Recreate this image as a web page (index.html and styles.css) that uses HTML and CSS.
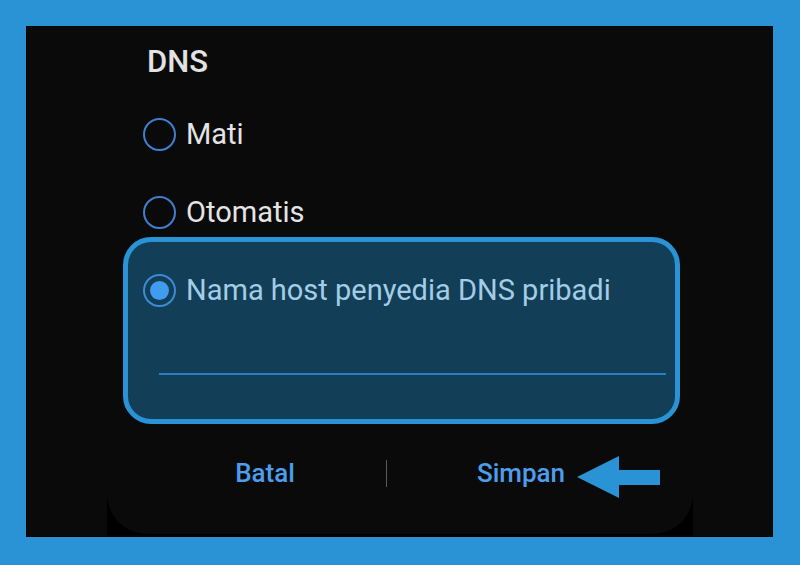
FILE: index.html
```html
<!DOCTYPE html>
<html lang="id">
<head>
  <meta charset="UTF-8">
  <title>DNS Pribadi</title>
  <link rel="stylesheet" href="styles.css">
</head>
<body>
  <div class="frame">
    <div class="screen">
      <div class="dialog">
        <div class="dialog-title">DNS</div>
        <div class="options">
          <label class="option">
            <span class="radio"></span>
            <span class="option-text">Mati</span>
          </label>
          <label class="option">
            <span class="radio"></span>
            <span class="option-text">Otomatis</span>
          </label>
          <div class="selected-box">
            <label class="option">
              <span class="radio checked"></span>
              <span class="option-text">Nama host penyedia DNS pribadi</span>
            </label>
            <div class="host-input"></div>
          </div>
        </div>
        <div class="actions">
          <button class="action-btn cancel-btn">Batal</button>
          <span class="divider"></span>
          <button class="action-btn save-btn">Simpan</button>
          <svg class="arrow" width="84" height="43" viewBox="0 0 84 43">
            <polygon points="0,21 42,0 42,14 83,14 83,29 42,29 42,42" fill="#2a93d5"/>
          </svg>
        </div>
      </div>
    </div>
  </div>
</body>
</html>
```

FILE: styles.css
```css
body {
  margin: 0;
  padding: 0;
  background-color: #2a93d5;
  font-family: Roboto, "Noto Sans", sans-serif;
}

.frame {
  padding: 26px 27px 28px 26px;
}

.screen {
  width: 745px;
  height: 509px;
  border: 1px solid #000;
  background: linear-gradient(to right, #0a0a0a 80px, #000 80px, #000 666px, #0a0a0a 666px);
}

.dialog {
  position: relative;
  margin-left: 80px;
  width: 586px;
  height: 507px;
  background-color: #0a0a0a;
  border-radius: 0 0 40px 40px;
}

.dialog-title {
  padding: 16px 0 0 40px;
  font-size: 31px;
  font-weight: 500;
  color: #e2e2e2;
  line-height: 37px;
}

.options {
  margin-top: 37px;
}

.option {
  display: flex;
  align-items: center;
  gap: 10px;
  height: 34px;
  margin-left: 36px;
  margin-bottom: 44px;
}

.radio {
  width: 29px;
  height: 29px;
  border: 2px solid #3f7fce;
  border-radius: 50%;
  display: flex;
  align-items: center;
  justify-content: center;
  flex-shrink: 0;
}

.radio.checked {
  border-color: #3b8bd6;
}

.radio.checked::after {
  content: "";
  width: 19px;
  height: 19px;
  border-radius: 50%;
  background-color: #3f9cf0;
}

.option-text {
  font-size: 29px;
  color: #e4e4e4;
}

.selected-box {
  box-sizing: border-box;
  height: 187px;
  margin: -36px 13px 0 16px;
  padding-top: 31px;
  border: 5px solid #2a93d5;
  border-radius: 28px;
  background-color: #123e57;
}

.selected-box .option {
  margin-left: 15px;
  margin-bottom: 0;
}

.selected-box .option-text {
  color: #a3cde6;
}

.host-input {
  margin: 66px 9px 0 31px;
  border-bottom: 2px solid #2a7fc4;
}

.actions {
  position: relative;
  display: flex;
  align-items: center;
  margin-top: 24px;
  padding-left: 37px;
  height: 50px;
}

.action-btn {
  background: none;
  border: none;
  padding: 0;
  font-family: Roboto, "Noto Sans", sans-serif;
  font-size: 26px;
  font-weight: 500;
  color: #4d9ded;
}

.cancel-btn {
  width: 242px;
}

.save-btn {
  width: 268px;
}

.divider {
  width: 1px;
  height: 27px;
  background-color: #5a5a5a;
}

.arrow {
  position: absolute;
  left: 470px;
  top: 8px;
}
```
